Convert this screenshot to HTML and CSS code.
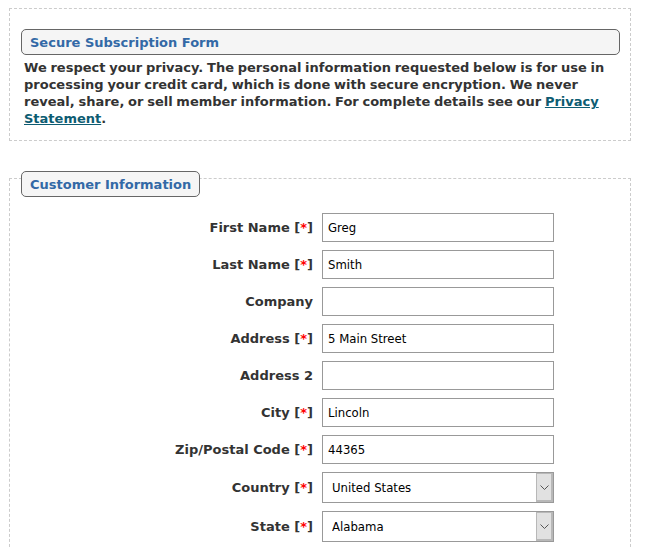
FILE: index.html
```html
<!DOCTYPE html>
<html lang="en">
<head>
<meta charset="utf-8">
<title>Secure Subscription Form</title>
<link rel="stylesheet" href="styles.css">
</head>
<body>
<div class="panel panel-intro">
  <div class="legend legend-wide">Secure Subscription Form</div>
  <p class="intro">We respect your privacy. The personal information requested below is for use in processing your credit card, which is done with secure encryption. We never reveal, share, or sell member information. For complete details see our <a href="#" class="link">Privacy Statement</a>.</p>
</div>

<div class="panel panel-form">
  <div class="legend legend-tab">Customer Information</div>
  <div class="form-grid">
    <label class="lbl">First Name <span class="req">[<b>*</b>]</span></label>
    <input class="field" type="text" value="Greg">
    <label class="lbl">Last Name <span class="req">[<b>*</b>]</span></label>
    <input class="field" type="text" value="Smith">
    <label class="lbl">Company</label>
    <input class="field" type="text" value="">
    <label class="lbl">Address <span class="req">[<b>*</b>]</span></label>
    <input class="field" type="text" value="5 Main Street">
    <label class="lbl">Address 2</label>
    <input class="field" type="text" value="">
    <label class="lbl">City <span class="req">[<b>*</b>]</span></label>
    <input class="field" type="text" value="Lincoln">
    <label class="lbl">Zip/Postal Code <span class="req">[<b>*</b>]</span></label>
    <input class="field" type="text" value="44365">
    <label class="lbl">Country <span class="req">[<b>*</b>]</span></label>
    <div class="select-wrap">
      <select class="select"><option>United States</option></select>
      <span class="arrow"><svg width="9" height="5" viewBox="0 0 9 5"><path d="M0.5 0.5 L4.5 4.5 L8.5 0.5" fill="none" stroke="#555" stroke-width="1"/></svg></span>
    </div>
    <label class="lbl">State <span class="req">[<b>*</b>]</span></label>
    <div class="select-wrap">
      <select class="select"><option>Alabama</option></select>
      <span class="arrow"><svg width="9" height="5" viewBox="0 0 9 5"><path d="M0.5 0.5 L4.5 4.5 L8.5 0.5" fill="none" stroke="#555" stroke-width="1"/></svg></span>
    </div>
  </div>
</div>
</body>
</html>
```
FILE: styles.css
```css
html, body {
  background: #ffffff;
}
body {
  margin: 8px;
  font-family: "DejaVu Sans", Verdana, sans-serif;
  font-size: 13px;
  color: #333333;
}
.panel {
  border: 1px dashed #cccccc;
  margin-left: 1px;
  width: 622px;
  box-sizing: border-box;
}
.panel-intro {
  padding: 20px 10px 13px 11px;
}
.legend {
  box-sizing: border-box;
  height: 26px;
  border: 1px solid #666666;
  border-radius: 5px;
  background: #f5f5f5;
  color: #3369a6;
  font-weight: bold;
  font-size: 13px;
  line-height: 25px;
  padding: 0 8px;
  white-space: nowrap;
}
.legend-wide {
  width: 599px;
}
.intro {
  margin: 4px 0 0 3px;
  font-weight: bold;
  line-height: 17px;
  word-spacing: -0.8px;
  color: #333333;
}
.link {
  color: #0d5c72;
  text-decoration: underline;
}
.panel-form {
  margin-top: 37px;
  border-bottom: none;
  padding: 0 0 20px 0;
  min-height: 370px;
}
.legend-tab {
  width: fit-content;
  margin: -8px 0 0 11px;
}
.form-grid {
  display: grid;
  grid-template-columns: 303px 232px;
  column-gap: 9px;
  row-gap: 8px;
  margin-top: 16px;
  align-items: center;
}
.lbl {
  text-align: right;
  font-weight: bold;
  color: #333333;
  white-space: nowrap;
}
.req {
  color: #333333;
}
.req b {
  color: #ff0000;
}
.field {
  box-sizing: border-box;
  width: 232px;
  height: 29px;
  margin: 0;
  border: 1px solid #999999;
  border-radius: 0;
  padding: 0 5px;
  font-family: "DejaVu Sans Condensed", "DejaVu Sans", sans-serif;
  font-stretch: condensed;
  font-size: 13px;
  color: #000000;
  background: #ffffff;
  outline: none;
}
.select-wrap {
  box-sizing: border-box;
  width: 232px;
  height: 31px;
  display: flex;
  border: 1px solid #999999;
  background: #ffffff;
}
.select {
  flex: 1;
  min-width: 0;
  -webkit-appearance: none;
  appearance: none;
  border: none;
  background: transparent;
  margin: 0;
  padding: 0 0 0 9px;
  font-family: "DejaVu Sans Condensed", "DejaVu Sans", sans-serif;
  font-stretch: condensed;
  font-size: 13px;
  color: #000000;
  outline: none;
}
.arrow {
  box-sizing: border-box;
  width: 17px;
  display: flex;
  align-items: center;
  justify-content: center;
  background: #e1e1e1;
  border: 1px solid #b8b8b8;
  border-right-width: 2px;
  border-bottom-width: 2px;
}
```
